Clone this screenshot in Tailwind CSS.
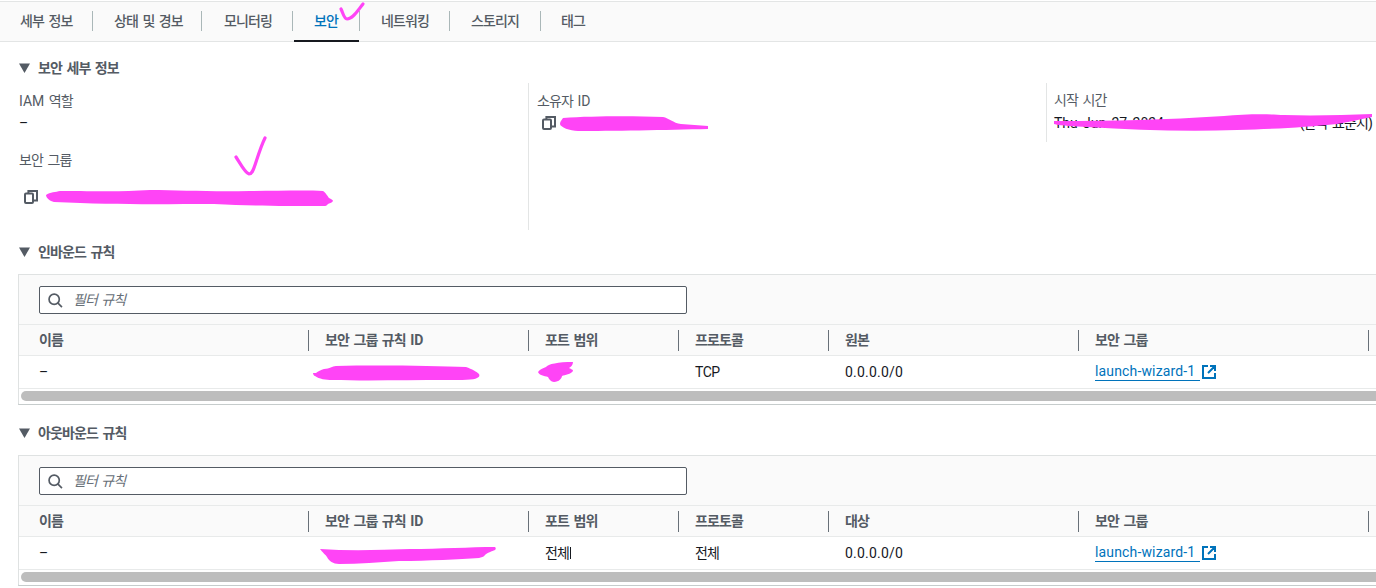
<!DOCTYPE html>
<html lang="ko">
<head>
    <meta charset="UTF-8">
    <title>보안</title>
    <script src="https://cdn.jsdelivr.net/npm/@tailwindcss/browser@4"></script>
</head>
<body class="bg-white">
<div class="relative w-[1376px] h-[588px] overflow-hidden font-['Roboto','Noto_Sans_CJK_KR',sans-serif] text-[14px] leading-[20px] tracking-[-0.88px] [word-spacing:1.8px] text-[#16191f]">

    <!-- tabs -->
    <div class="mt-px h-[41px] pb-[2px] border-t border-b border-[#e3e5e5] bg-[#fafafa] flex items-center font-medium text-[#545b64]">
        <a class="w-[93px] pl-[20px] h-[20px] border-r border-[#aab7b8] flex items-center">세부 정보</a>
        <a class="w-[109px] pl-[21px] h-[20px] border-r border-[#aab7b8] flex items-center">상태 및 경보</a>
        <a class="w-[91px] pl-[22px] h-[20px] border-r border-[#aab7b8] flex items-center">모니터링</a>
        <a class="relative w-[67px] pl-[21px] h-[20px] border-r border-[#aab7b8] flex items-center text-[#0073bb]">보안<span class="absolute left-[1px] right-0 top-[29px] h-[2px] bg-[#16191f]"></span></a>
        <a class="w-[90px] pl-[21px] h-[20px] border-r border-[#aab7b8] flex items-center">네트워킹</a>
        <a class="w-[91px] pl-[21px] h-[20px] border-r border-[#aab7b8] flex items-center">스토리지</a>
        <a class="pl-[20px] h-[20px] flex items-center">태그</a>
    </div>

    <!-- 보안 세부 정보 -->
    <h2 class="mt-[16px] pl-[19px] h-[20px] flex items-center gap-[8px] font-bold text-[#545b64]">
        <svg class="w-[11px] h-[10px]" viewBox="0 0 11 10"><path d="M0 0.5h11L5.5 10z" fill="#545b64"/></svg>
        보안 세부 정보
    </h2>
    <div class="mt-[5px] grid grid-cols-[528px_518px_330px] h-[147px]">
        <div class="pl-[19px] pt-[8px]">
            <div class="text-[#545b64]"><span class="tracking-normal">IAM</span> 역할</div>
            <div class="mt-[2px]">–</div>
            <div class="mt-[17px] text-[#545b64]">보안 그룹</div>
            <div class="mt-[19px] pl-[5px] h-[16px] flex items-center">
                <svg class="w-[14px] h-[14px]" viewBox="0 0 14 14" fill="none" stroke="#545b64" stroke-width="2"><rect x="1" y="3.6" width="8" height="9.4" rx="1"/><path d="M4.4 3.4V1h8.6v9.6h-3.6"/></svg>
            </div>
        </div>
        <div class="border-l border-[#e3e5e5] pl-[8px] pt-[8px]">
            <div class="text-[#545b64]">소유자 <span class="tracking-normal">ID</span></div>
            <div class="mt-[4px] pl-[5px] h-[16px] flex items-center">
                <svg class="w-[14px] h-[14px]" viewBox="0 0 14 14" fill="none" stroke="#545b64" stroke-width="2"><rect x="1" y="3.6" width="8" height="9.4" rx="1"/><path d="M4.4 3.4V1h8.6v9.6h-3.6"/></svg>
            </div>
        </div>
        <div class="h-[59px] border-l border-[#e3e5e5] pl-[7px] pt-[7px]">
            <div class="text-[#545b64]">시작 시간</div>
            <div class="mt-[3px] w-[318px] flex justify-between whitespace-nowrap"><span class="tracking-normal">Thu Jun 27 2024</span><span>(한국 표준시)</span></div>
        </div>
    </div>

    <!-- 인바운드 규칙 -->
    <h2 class="mt-[12px] pl-[19px] h-[20px] flex items-center gap-[8px] font-bold text-[#545b64]">
        <svg class="w-[11px] h-[10px]" viewBox="0 0 11 10"><path d="M0 0.5h11L5.5 10z" fill="#545b64"/></svg>
        인바운드 규칙
    </h2>
    <div class="mt-[12px] ml-[18px] h-[131px] border border-[#dfe2e2] border-b-2 border-b-[#c6cccc] border-r-0 bg-[#fafafa] box-border">
        <div class="h-[49px] pt-[11px] pl-[20px]">
            <div class="w-[648px] h-[28px] border border-[#545b64] rounded-[2px] bg-white flex items-center pl-[8px] gap-[10px] italic text-[#687078]">
                <svg class="w-[15px] h-[15px]" viewBox="0 0 17 17" fill="none" stroke="#545b64" stroke-width="1.9"><circle cx="7" cy="7" r="5.8"/><path d="M11 11.2l4.8 4.8"/></svg>
                필터 규칙
            </div>
        </div>
        <div class="h-[32px] border-t border-b border-[#e8eaea] grid grid-cols-[289px_220px_150px_150px_250px_290px_1fr] items-center font-bold text-[#545b64]">
            <div class="pl-[20px]">이름</div>
            <div class="h-[21px] border-l border-[#687078] pl-[16px]">보안 그룹 규칙 <span class="tracking-normal">ID</span></div>
            <div class="h-[21px] border-l border-[#687078] pl-[16px]">포트 범위</div>
            <div class="h-[21px] border-l border-[#687078] pl-[16px]">프로토콜</div>
            <div class="h-[21px] border-l border-[#687078] pl-[16px]">원본</div>
            <div class="h-[21px] border-l border-[#687078] pl-[16px]">보안 그룹</div>
            <div class="h-[21px] border-l border-[#687078]"></div>
        </div>
        <div class="h-[33px] bg-white border-b border-[#e8eaea] grid grid-cols-[289px_220px_150px_150px_250px_290px_1fr] items-center">
            <div class="pl-[20px]">–</div>
            <div></div>
            <div></div>
            <div class="pl-[17px] tracking-[-0.5px]">TCP</div>
            <div class="pl-[17px] tracking-[0.2px]">0.0.0.0/0</div>
            <div class="pl-[17px] flex items-center gap-[2px] text-[#0073bb] tracking-[0.15px]">
                <span class="border-b border-[#0073bb] leading-[17px] pr-[5px]">launch-wizard-1</span>
                <svg class="w-[14px] h-[14px]" viewBox="0 0 14 14" fill="none" stroke="#0073bb" stroke-width="2"><path d="M6 1H1v12h12V8M8 1h5v5M13 1L6 8"/></svg>
            </div>
        </div>
        <div class="h-[15px] pt-[2px] pl-[2px] bg-white">
            <div class="h-[10px] rounded-l-[5px] bg-[#bdbdbd]"></div>
        </div>
    </div>

    <!-- 아웃바운드 규칙 -->
    <h2 class="mt-[18px] pl-[19px] h-[20px] flex items-center gap-[8px] font-bold text-[#545b64]">
        <svg class="w-[11px] h-[10px]" viewBox="0 0 11 10"><path d="M0 0.5h11L5.5 10z" fill="#545b64"/></svg>
        아웃바운드 규칙
    </h2>
    <div class="mt-[12px] ml-[18px] h-[131px] border border-[#dfe2e2] border-b-2 border-b-[#c6cccc] border-r-0 bg-[#fafafa] box-border">
        <div class="h-[49px] pt-[11px] pl-[20px]">
            <div class="w-[648px] h-[28px] border border-[#545b64] rounded-[2px] bg-white flex items-center pl-[8px] gap-[10px] italic text-[#687078]">
                <svg class="w-[15px] h-[15px]" viewBox="0 0 17 17" fill="none" stroke="#545b64" stroke-width="1.9"><circle cx="7" cy="7" r="5.8"/><path d="M11 11.2l4.8 4.8"/></svg>
                필터 규칙
            </div>
        </div>
        <div class="h-[32px] border-t border-b border-[#e8eaea] grid grid-cols-[289px_220px_150px_150px_250px_290px_1fr] items-center font-bold text-[#545b64]">
            <div class="pl-[20px]">이름</div>
            <div class="h-[21px] border-l border-[#687078] pl-[16px]">보안 그룹 규칙 <span class="tracking-normal">ID</span></div>
            <div class="h-[21px] border-l border-[#687078] pl-[16px]">포트 범위</div>
            <div class="h-[21px] border-l border-[#687078] pl-[16px]">프로토콜</div>
            <div class="h-[21px] border-l border-[#687078] pl-[16px]">대상</div>
            <div class="h-[21px] border-l border-[#687078] pl-[16px]">보안 그룹</div>
            <div class="h-[21px] border-l border-[#687078]"></div>
        </div>
        <div class="h-[33px] bg-white border-b border-[#e8eaea] grid grid-cols-[289px_220px_150px_150px_250px_290px_1fr] items-center">
            <div class="pl-[20px]">–</div>
            <div></div>
            <div class="pl-[17px] flex items-center gap-px">전체<span class="w-px h-[12px] bg-[#16191f]"></span></div>
            <div class="pl-[17px]">전체</div>
            <div class="pl-[17px] tracking-[0.2px]">0.0.0.0/0</div>
            <div class="pl-[17px] flex items-center gap-[2px] text-[#0073bb] tracking-[0.15px]">
                <span class="border-b border-[#0073bb] leading-[17px] pr-[5px]">launch-wizard-1</span>
                <svg class="w-[14px] h-[14px]" viewBox="0 0 14 14" fill="none" stroke="#0073bb" stroke-width="2"><path d="M6 1H1v12h12V8M8 1h5v5M13 1L6 8"/></svg>
            </div>
        </div>
        <div class="h-[15px] pt-[2px] pl-[2px] bg-white">
            <div class="h-[10px] rounded-l-[5px] bg-[#bdbdbd]"></div>
        </div>
    </div>

    <!-- pink marker drawn over the screenshot -->
    <svg class="absolute left-0 top-0 w-[1376px] h-[588px] pointer-events-none" viewBox="0 0 1376 588" fill="#ff44f6">
        <g fill="none" stroke="#ff44f6" stroke-width="3.2" stroke-linecap="round" stroke-linejoin="round">
            <path d="M341 9c2 4 3 10 6 10c6 0 11-9 16-15"/>
            <path d="M236 157c4 6 9 16 13 17c3 0 4-3 6-9c3-9 6-19 10-27"/>
        </g>
        <path d="M46 195c4-3 10-3 14-4c40 0 60 1 90-1c30 0 60 2 100 1c25 0 55-1 73 0c3 2 5 6 6 7c2 1 4 2 4 3c-1 2-4 2-5 3c-2 2-2 2-4 2c-40 0-70 0-110-2c-50 0-100 1-160-2c-4-1-8-4-8-7z"/>
        <path d="M560 124c0-3 2-4 3-6c30-2 70-2 100-1c6 1 10 6 18 7c9 1 18 1 27 2v3c-40 1-100 2-130 2c-8 0-18-4-18-7z"/>
        <path d="M1054 121c60 0 110-1 170-5c20-2 45-2 60-1c30 1 60 0 88-1v3c-14 3-24 5-35 7c-30 3-60 5-100 6c-50 2-100 0-150-3c-12-1-25-1-33-3z"/>
        <path d="M316 373c2-2 5-3 8-4c6 0 8-3 12-3c45-1 100 0 130 1c6 2 11 5 13 7c1 2 0 3-2 4c-3 2-15 2-30 2c-40 0-80 1-115 0c-6 0-13-1-17-4c-1 0-2-2-2-3z"/>
        <path d="M538 372c2-3 6-4 8-5c2-3 12-5 27-5c0 3-2 5-4 6c1 1 4 1 4 3c-2 3-8 4-11 5c0 2-3 6-8 6c-3 0-5-3-6-5c-4-1-9-2-10-5z"/>
        <path d="M320 549c30 2 60 1 90 0c30 0 60-2 85-2c1 1 1 2 0 3c-3 1-8 3-10 5c-1 2-4 2-6 3c-20 1-50 3-80 3c-20 1-40 3-60 3c-6 0-10-3-12-7c-1-2-5-5-7-8z"/>
    </svg>
</div>
</body>
</html>
